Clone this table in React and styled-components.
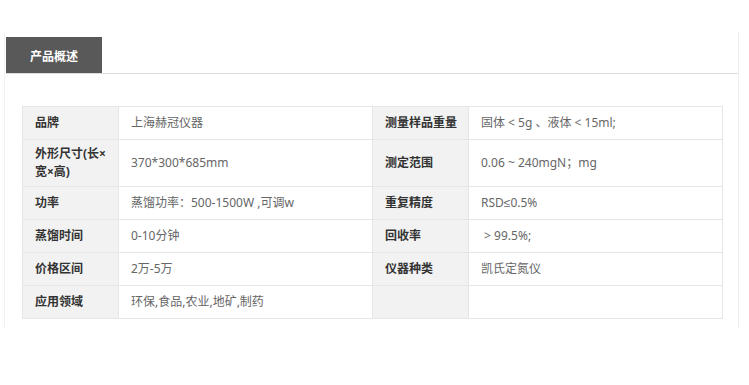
import React from 'react';
import styled, { createGlobalStyle } from 'styled-components';

const GlobalStyle = createGlobalStyle`
  html, body {
    margin: 0;
    padding: 0;
    background: #ffffff;
  }
  body {
    font-family: "Noto Sans", "Liberation Sans", "Noto Sans CJK SC", sans-serif;
    font-size: 12px;
  }
`;

const Panel = styled.section`
  width: 733px;
  margin: 32px 0 0 4px;
  padding: 5px 0 9px 0;
  border-left: 1px solid #f2f2f2;
  border-right: 1px solid #efefef;
`;

const TabBar = styled.div`
  display: flex;
  margin-left: 1px;
  border-bottom: 1px solid #dcdcdc;
`;

const Tab = styled.div`
  width: 96px;
  height: 36px;
  box-sizing: border-box;
  padding-left: 24px;
  display: flex;
  align-items: center;
  background: ${props => props.active ? '#595959' : 'transparent'};
  color: ${props => props.active ? '#ffffff' : '#333333'};
  font-family: "Noto Sans CJK SC", sans-serif;
  font-size: 12px;
  font-weight: 700;
`;

const Table = styled.table`
  width: 700px;
  margin: 32px 0 0 17px;
  border-collapse: collapse;
  table-layout: fixed;
`;

const Cell = styled.td`
  height: 33px;
  box-sizing: border-box;
  padding: 5px 11px 5px 12px;
  border: 1px solid #e6e6e6;
  line-height: 18px;
  vertical-align: middle;
  font-family: "Noto Sans", "Liberation Sans", "Noto Sans CJK SC", sans-serif;
  font-size: 12px;
  background: ${props => props.label ? '#f2f2f2' : '#ffffff'};
  color: ${props => props.label ? '#333333' : '#666666'};
  font-weight: ${props => props.label ? 700 : 400};
`;

const rows = [
  ['品牌', '上海赫冠仪器', '测量样品重量', '固体 < 5g 、液体 < 15ml;'],
  ['外形尺寸(长×宽×高)', '370*300*685mm', '测定范围', '0.06 ~ 240mgN；mg'],
  ['功率', '蒸馏功率：500-1500W ,可调w', '重复精度', 'RSD≤0.5%'],
  ['蒸馏时间', '0-10分钟', '回收率', '\u00a0> 99.5%;'],
  ['价格区间', '2万-5万', '仪器种类', '凯氏定氮仪'],
  ['应用领域', '环保,食品,农业,地矿,制药', '', ''],
];

export default function App() {
  return (
    <>
      <GlobalStyle />
      <Panel>
        <TabBar>
          <Tab active>产品概述</Tab>
        </TabBar>
        <Table>
          <colgroup>
            <col style={{ width: 96 }} />
            <col style={{ width: 254 }} />
            <col style={{ width: 96 }} />
            <col style={{ width: 254 }} />
          </colgroup>
          <tbody>
            {rows.map((r, i) => (
              <tr key={i}>
                <Cell label>{r[0]}</Cell>
                <Cell>{r[1]}</Cell>
                <Cell label>{r[2]}</Cell>
                <Cell>{r[3]}</Cell>
              </tr>
            ))}
          </tbody>
        </Table>
      </Panel>
    </>
  );
}
